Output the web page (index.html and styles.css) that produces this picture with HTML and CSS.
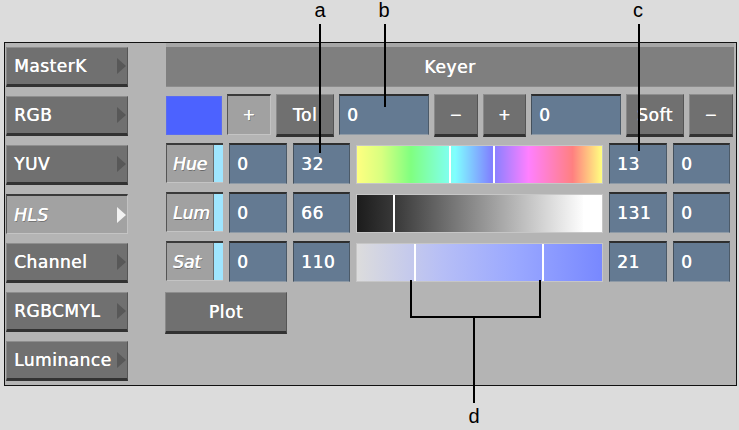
FILE: index.html
```html
<!DOCTYPE html>
<html>
<head>
<meta charset="utf-8">
<link rel="stylesheet" href="styles.css">
</head>
<body>
<div class="page">
  <div class="panel">
    <div class="menu">
      <div class="mbtn"><span>MasterK</span><i class="tri"></i></div>
      <div class="mbtn"><span>RGB</span><i class="tri"></i></div>
      <div class="mbtn"><span>YUV</span><i class="tri"></i></div>
      <div class="mbtn sel"><span>HLS</span><i class="tri"></i></div>
      <div class="mbtn"><span>Channel</span><i class="tri"></i></div>
      <div class="mbtn"><span>RGBCMYL</span><i class="tri"></i></div>
      <div class="mbtn"><span>Luminance</span><i class="tri"></i></div>
    </div>
    <div class="main">
      <div class="header">Keyer</div>
      <div class="row r1">
        <div class="swatch"></div>
        <div class="lbtn w44 sym"><em>+</em></div>
        <div class="btn w58">Tol</div>
        <div class="field w90">0</div>
        <div class="btn w44 sym">−</div>
        <div class="btn w43 sym">+</div>
        <div class="field w90">0</div>
        <div class="btn w58">Soft</div>
        <div class="btn w44 sym">−</div>
      </div>
      <div class="row">
        <div class="label"><span class="ltxt">Hue</span><span class="strip"></span></div>
        <div class="field w58">0</div>
        <div class="field w57">32</div>
        <div class="bar hue"><i class="mark" style="left:92px"></i><i class="mark" style="left:136px"></i></div>
        <div class="field w58">13</div>
        <div class="field w57">0</div>
      </div>
      <div class="row">
        <div class="label"><span class="ltxt">Lum</span><span class="strip"></span></div>
        <div class="field w58">0</div>
        <div class="field w57">66</div>
        <div class="bar lum"><i class="mark" style="left:36px"></i><i class="mark" style="left:226px"></i></div>
        <div class="field w58">131</div>
        <div class="field w57">0</div>
      </div>
      <div class="row">
        <div class="label"><span class="ltxt">Sat</span><span class="strip"></span></div>
        <div class="field w58">0</div>
        <div class="field w57">110</div>
        <div class="bar sat"><i class="mark" style="left:57px"></i><i class="mark" style="left:185px"></i></div>
        <div class="field w58">21</div>
        <div class="field w57">0</div>
      </div>
      <div class="row prow">
        <div class="btn plot">Plot</div>
      </div>
    </div>
  </div>
  <svg class="notes" width="739" height="430" viewBox="0 0 739 430">
    <g stroke="#000" stroke-width="2" fill="none">
      <line x1="320" y1="24" x2="320" y2="153"/>
      <line x1="385" y1="24" x2="385" y2="107"/>
      <line x1="639" y1="24" x2="639" y2="151"/>
      <path d="M411 280 V317 H540 V280 M474 317 V403"/>
    </g>
    <g font-family="Liberation Sans, Arial, sans-serif" font-size="20" fill="#000" text-anchor="middle">
      <text x="320" y="17">a</text>
      <text x="384" y="17">b</text>
      <text x="638" y="17">c</text>
      <text x="474" y="423">d</text>
    </g>
  </svg>
</div>
</body>
</html>
```

FILE: styles.css
```css
* { box-sizing: border-box; }
body {
  margin: 0;
  background: #dcdcdc;
  font-family: "DejaVu Sans", "Liberation Sans", sans-serif;
}
.page {
  position: relative;
  width: 739px;
  height: 430px;
  padding: 42px 0 0 4px;
}
.panel {
  width: 733px;
  height: 344px;
  border: 1px solid #111;
  background: #b4b4b4;
  display: flex;
  gap: 38px;
  padding: 0 0 0 1px;
}
.menu {
  width: 122px;
  padding-top: 4px;
  display: flex;
  flex-direction: column;
  gap: 9px;
}
.mbtn {
  height: 40px;
  display: flex;
  align-items: center;
  justify-content: space-between;
  padding: 0 1px 0 7px;
  background: #707070;
  border-top: 1px solid #8e8e8e;
  border-left: 1px solid #8a8a8a;
  border-right: 1px solid #555;
  border-bottom: 3px solid #323232;
  color: #fff;
  font-size: 17px;
  letter-spacing: 0.5px;
  text-shadow: 0.4px 0 0 #fff;
}
.mbtn .tri {
  width: 0;
  height: 0;
  border-left: 9px solid #585858;
  border-top: 8px solid transparent;
  border-bottom: 8px solid transparent;
}
.mbtn.sel {
  background: #a2a2a2;
  border-top: 2px solid #3a3a3a;
  border-left: 1px solid #555;
  border-right: 1px solid #c2c2c2;
  border-bottom: 1px solid #c4c4c4;
  font-style: italic;
  text-shadow: 0.4px 0 0 #fff, 1px 1px 0 rgba(0,0,0,0.3);
}
.mbtn.sel .tri { border-left-color: #f2f2f2; }
.main {
  display: flex;
  flex-direction: column;
  width: 568px;
}
.header {
  height: 44px;
  background: #7f7f7f;
  border-top: 4px solid #a6a6a6;
  border-bottom: 1px solid #8c8c8c;
  color: #fff;
  font-size: 17px;
  letter-spacing: 0.6px;
  text-shadow: 0.4px 0 0 #fff;
  display: flex;
  align-items: center;
  justify-content: center;
}
.row {
  display: flex;
  gap: 6px;
  height: 41px;
  margin-top: 8px;
}
.r1 { gap: 5px; margin-top: 7px; }
.prow { margin-top: 10px; }
.btn, .lbtn, .field {
  height: 41px;
  display: flex;
  align-items: center;
  color: #fff;
  font-size: 17px;
  letter-spacing: 0.6px;
  text-shadow: 0.4px 0 0 #fff;
}
.btn {
  justify-content: center;
  background: #707070;
  border-top: 1px solid #8e8e8e;
  border-left: 1px solid #8a8a8a;
  border-right: 1px solid #555;
  border-bottom: 3px solid #323232;
}
.r1 .btn { height: 43px; }
.lbtn {
  justify-content: center;
  background: #a1a1a1;
  border-top: 2px solid #3a3a3a;
  border-left: 1px solid #555;
  border-right: 1px solid #c2c2c2;
  border-bottom: 1px solid #c4c4c4;
  text-shadow: 0.4px 0 0 #fff, 1px 1px 0 rgba(0,0,0,0.3);
}
.sym { font-size: 15px; }
.field {
  background: #647a92;
  border-top: 2px solid #2e2e2e;
  border-left: 1px solid #44505c;
  border-right: 1px solid #4c5a68;
  border-bottom: 1px solid #8e9aa6;
  padding-left: 7px;
}
.swatch {
  width: 56px;
  height: 39px;
  margin-top: 2px;
  background: #4c62ff;
  border: 1px solid #5a6cf0;
}
.w43 { width: 43px; }
.w44 { width: 44px; }
.w57 { width: 57px; }
.w58 { width: 58px; }
.w90 { width: 90px; }
.label {
  width: 57px;
  height: 40px;
  display: flex;
  border-top: 2px solid #3a3a3a;
  border-left: 1px solid #555;
  border-bottom: 1px solid #c4c4c4;
}
.ltxt {
  flex: 1;
  background: #a1a1a1;
  color: #fff;
  font-size: 17px;
  font-style: italic;
  display: flex;
  align-items: center;
  padding-left: 6px;
  text-shadow: 0.6px 0 0 #fff, 1px 1px 0 rgba(0,0,0,0.35);
}
.strip {
  width: 10px;
  background: #9fe6ff;
  border-left: 1px solid #6a6a6a;
}
.bar {
  position: relative;
  width: 247px;
  height: 39px;
  margin-top: 2px;
  border: 1px solid #c6c6c6;
}
.hue {
  background: linear-gradient(to right, #ffff80 0%, #d8ff80 10%, #80ff80 22%, #80ffff 40%, #8080ff 55%, #ff80ff 70%, #ff8080 88%, #ffff80 100%);
}
.lum {
  background: linear-gradient(to right, #1c1c1c 0%, #3a3a3a 16%, #ffffff 93%, #ffffff 100%);
}
.sat {
  background: linear-gradient(to right, #dcdcdc 0%, #b6bef6 35%, #9aa8ff 65%, #7888ff 100%);
}
.mark {
  position: absolute;
  top: 0;
  bottom: 0;
  width: 2px;
  background: #fff;
}
.plot {
  width: 122px;
  height: 42px;
  margin-left: -1px;
}
.notes {
  position: absolute;
  left: 0;
  top: 0;
  pointer-events: none;
}
```
